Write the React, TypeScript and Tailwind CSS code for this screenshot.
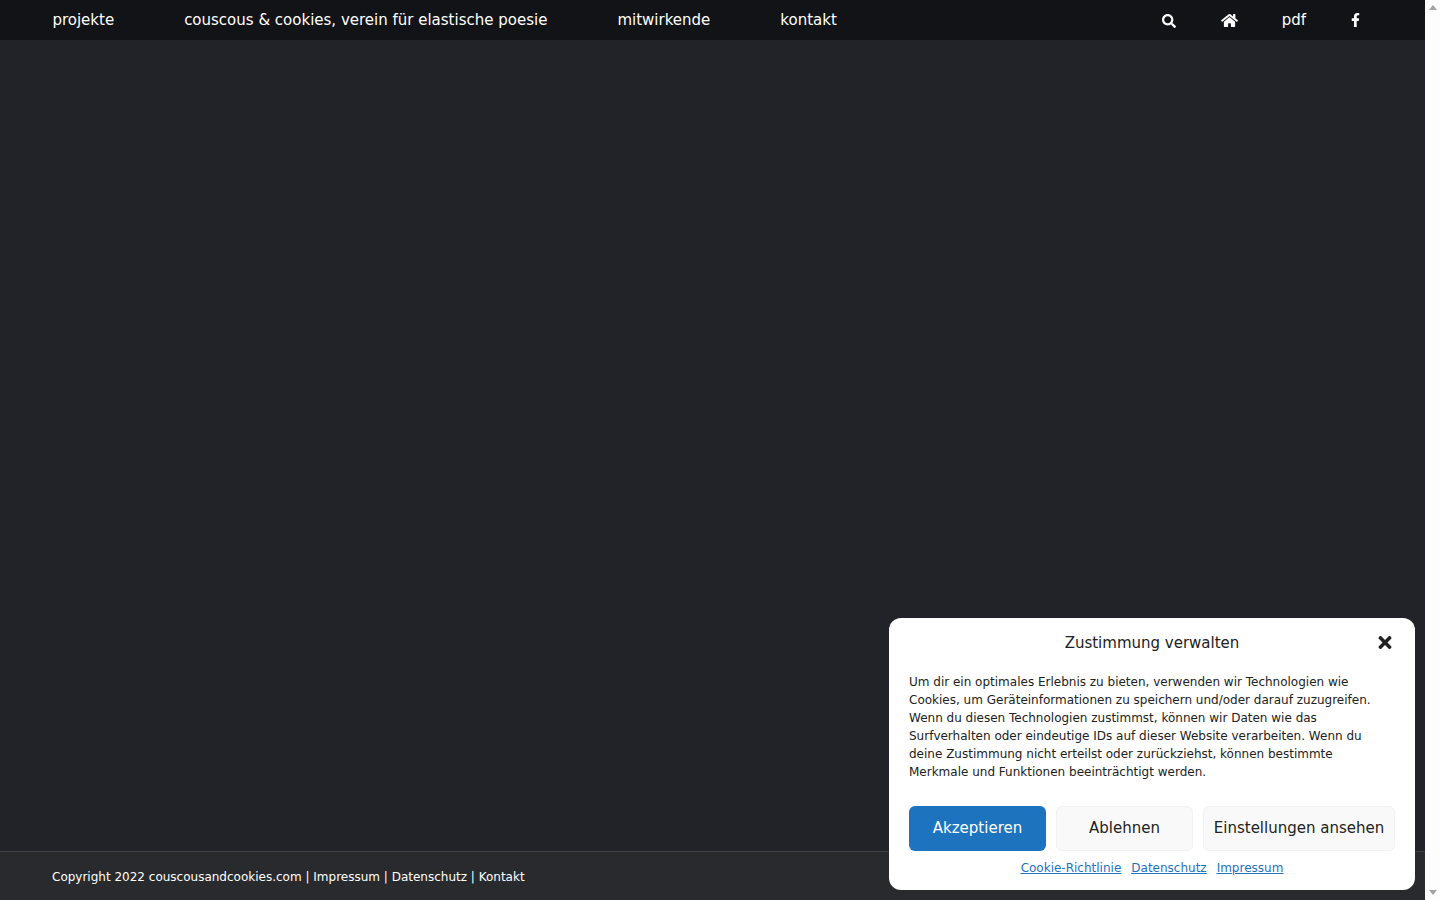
import { FaSearch, FaHome, FaFacebookF, FaTimes } from "react-icons/fa";

const font = "font-['DejaVu_Sans',sans-serif]";

export default function App() {
  return (
    <div className={`relative flex h-[900px] w-[1440px] overflow-hidden bg-[#fdfdfd] ${font}`}>
      <div className="flex h-full w-[1425px] flex-col bg-[#212328]">
        <header className="flex h-10 items-center justify-between bg-[#121316] pl-[52.4px] pr-[65px] text-[15px] text-white">
          <nav className="flex items-center gap-[70px]">
            <a>projekte</a>
            <a>couscous &amp; cookies, verein für elastische poesie</a>
            <a>mitwirkende</a>
            <a>kontakt</a>
          </nav>
          <div className="flex items-center">
            <FaSearch className="mt-[1px] h-[14px] w-[14px]" />
            <FaHome className="ml-[45px] h-[15px] w-[17px]" />
            <span className="ml-[44px]">pdf</span>
            <FaFacebookF className="ml-[45px] h-[14px] w-[9px]" />
          </div>
        </header>
        <main className="flex-1" />
        <footer className="flex h-[49px] items-center border-t border-[#404144] bg-[#292a2d] pl-[52px] pt-[2px] text-[12px] text-white">
          Copyright 2022 couscousandcookies.com | Impressum | Datenschutz | Kontakt
        </footer>
      </div>

      <div className="flex h-full w-[15px] flex-col items-center justify-between bg-[#fdfdfd] py-[5px]">
        <div className="h-0 w-0 border-x-[4.5px] border-b-[5px] border-x-transparent border-b-[#a3a3a3]" />
        <div className="h-0 w-0 border-x-[4.5px] border-t-[5px] border-x-transparent border-t-[#a3a3a3]" />
      </div>

      <div className="absolute left-[889px] top-[618px] flex h-[272px] w-[526px] flex-col rounded-xl bg-white px-5 text-[#222222]">
        <div className="relative flex h-[50px] items-center justify-center text-[15px]">
          Zustimmung verwalten
          <FaTimes className="absolute right-[2px] top-[15px] h-[19px] w-[16px] text-[#222]" />
        </div>
        <p className="mt-[5px] text-[12px] leading-[18px]">
          Um dir ein optimales Erlebnis zu bieten, verwenden wir Technologien wie
          <br />
          Cookies, um Geräteinformationen zu speichern und/oder darauf zuzugreifen.
          <br />
          Wenn du diesen Technologien zustimmst, können wir Daten wie das
          <br />
          Surfverhalten oder eindeutige IDs auf dieser Website verarbeiten. Wenn du
          <br />
          deine Zustimmung nicht erteilst oder zurückziehst, können bestimmte
          <br />
          Merkmale und Funktionen beeinträchtigt werden.
        </p>
        <div className="mt-[25px] flex gap-[10px] text-[15px]">
          <button className="h-[45px] w-[137px] rounded-md bg-[#1e73be] text-white">Akzeptieren</button>
          <button className="h-[45px] w-[137px] rounded-md border border-[#f2f2f2] bg-[#f9f9f9]">Ablehnen</button>
          <button className="h-[45px] w-[192px] rounded-md border border-[#f2f2f2] bg-[#f9f9f9]">Einstellungen ansehen</button>
        </div>
        <div className="mt-[8px] flex justify-center gap-[10px] text-[12px] text-[#1e73be] underline">
          <a>Cookie-Richtlinie</a>
          <a>Datenschutz</a>
          <a>Impressum</a>
        </div>
      </div>
    </div>
  );
}
